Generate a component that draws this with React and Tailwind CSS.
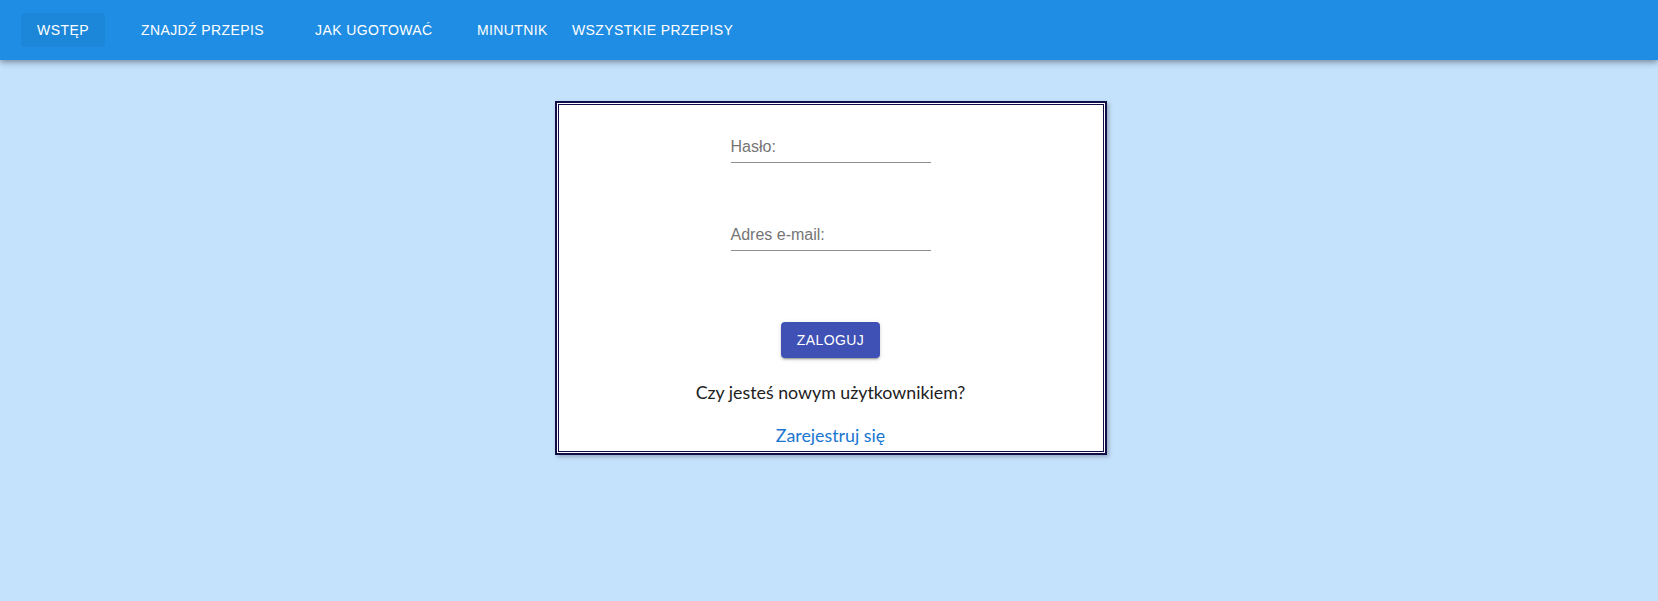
const navItems = [
  { label: 'WSTĘP', active: true },
  { label: 'ZNAJDŹ PRZEPIS', w: 'w-[174px]', ml: 'ml-[36px]' },
  { label: 'JAK UGOTOWAĆ', w: 'w-[162px]' },
  { label: 'MINUTNIK', w: 'w-[95px]' },
  { label: 'WSZYSTKIE PRZEPISY' },
]

function Field({ placeholder }) {
  return (
    <div className="w-[200px] border-b border-[#8d8d8d] pb-[6px] text-[16px] leading-[19px] text-[#757575]">
      {placeholder}
    </div>
  )
}

export default function App() {
  return (
    <div className="min-h-[601px] bg-[#c5e2fd] font-['Liberation_Sans',Arial,sans-serif]">
      <nav className="flex h-[60px] items-center bg-[#1f8de3] pl-[21px] shadow-[0_2px_4px_-1px_rgba(0,0,0,0.2),0_4px_5px_0_rgba(0,0,0,0.14),0_1px_10px_0_rgba(0,0,0,0.12)]">
        {navItems.map((item) =>
          item.active ? (
            <button
              key={item.label}
              className="h-[34px] w-[84px] rounded bg-[#1c86d8] text-center text-[14px] tracking-[0.4px] text-white"
            >
              {item.label}
            </button>
          ) : (
            <button
              key={item.label}
              className={`${item.w || ''} ${item.ml || ''} h-[34px] text-left text-[14px] tracking-[0.4px] text-white`}
            >
              {item.label}
            </button>
          )
        )}
      </nav>

      <div className="flex justify-center pl-[3px] pt-[41px]">
        <div className="w-[552px] border-2 border-[#100d48] bg-white p-px shadow-[2px_2px_4px_rgba(0,0,0,0.25)]">
          <div className="flex h-[348px] flex-col items-center border border-[#100d48] pt-[32px]">
            <Field placeholder="Hasło:" />
            <div className="h-[62px]" />
            <Field placeholder="Adres e-mail:" />
            <button className="mt-[71px] h-[36px] w-[99px] rounded bg-[#3f51b5] text-[14px] tracking-[0.4px] text-white shadow-[0_3px_1px_-2px_rgba(0,0,0,0.2),0_2px_2px_0_rgba(0,0,0,0.14),0_1px_5px_0_rgba(0,0,0,0.12)]">
              ZALOGUJ
            </button>
            <p className="mt-[23px] font-['Lato',sans-serif] text-[17.8px] leading-[22px] text-[#212121]">
              Czy jesteś nowym użytkownikiem?
            </p>
            <a className="mt-[21px] font-['Lato',sans-serif] text-[17.8px] leading-[22px] text-[#1976d2]" href="#">
              Zarejestruj się
            </a>
          </div>
        </div>
      </div>
    </div>
  )
}
